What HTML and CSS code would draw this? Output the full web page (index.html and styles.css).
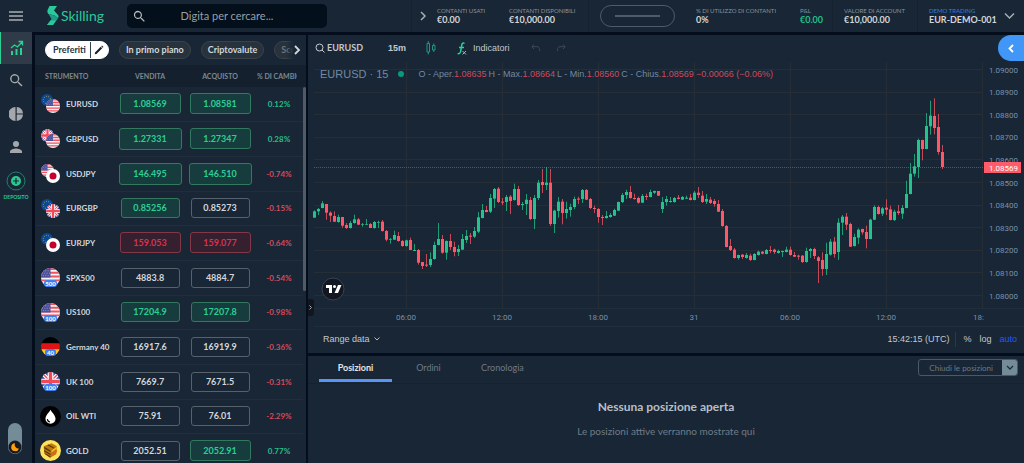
FILE: index.html
```html
<!DOCTYPE html>
<html lang="it">
<head>
<meta charset="utf-8">
<title>Skilling</title>
<meta name="viewport" content="width=device-width, initial-scale=1">
<link rel="stylesheet" href="styles.css">
</head>
<body>
<svg class="defs" aria-hidden="true">
  <defs>
    <clipPath id="round"><circle cx="10" cy="10" r="10"/></clipPath>
    <symbol id="us" viewBox="0 0 20 20"><g clip-path="url(#round)"><path fill="#f4f4f6" d="M0 0h20v20H0z"/><path stroke="#f0525f" stroke-width="2" d="M0 1h20M0 5h20M0 9h20M0 13h20M0 17h20"/><path fill="#4a4f9a" d="M0 0h10v10H0z"/><path stroke="#9ca0cf" stroke-width="1" stroke-dasharray="1 1.5" d="M2 3h8M1 5.500h9M2 8h8"/></g></symbol>
    <symbol id="eu" viewBox="0 0 20 20"><circle cx="10" cy="10" r="10" fill="#0b4a93"/><circle cx="10" cy="10" r="6" fill="none" stroke="#b9a84a" stroke-width="1.600" stroke-dasharray="1.500 2.200"/></symbol>
    <symbol id="gb" viewBox="0 0 20 20"><g clip-path="url(#round)"><path fill="#3b4a9c" d="M0 0h20v20H0z"/><path stroke="#fff" stroke-width="4" d="M0 0l20 20M20 0L0 20"/><path stroke="#e8505e" stroke-width="1.500" d="M0 0l20 20M20 0L0 20"/><path stroke="#fff" stroke-width="6" d="M10 0v20M0 10h20"/><path stroke="#f04a5a" stroke-width="3.500" d="M10 0v20M0 10h20"/></g></symbol>
    <symbol id="jp" viewBox="0 0 20 20"><circle cx="10" cy="10" r="10" fill="#fff"/><circle cx="10" cy="10" r="5" fill="#c4002f"/></symbol>
    <symbol id="de" viewBox="0 0 20 20"><g clip-path="url(#round)"><path d="M0 0h20v7H0z"/><path fill="#e01414" d="M0 6.500h20v7H0z"/><path fill="#ffc81e" d="M0 13h20v7H0z"/></g></symbol>
    <symbol id="oil" viewBox="0 0 20 20"><circle cx="10" cy="10" r="10"/><path fill="#fff" d="M10 3.500c1 2.200 4.800 5.400 4.800 8.600a4.800 4.800 0 0 1-9.600 0C5.200 8.900 9 5.700 10 3.500z"/><path stroke="#000" fill="none" d="M7 12.500a3 3 0 0 0 2.500 2.700"/></symbol>
    <symbol id="gold" viewBox="0 0 20 20"><circle cx="10" cy="10" r="10" fill="#ffe15c"/><path fill="#b97a10" d="M3.500 6L11 3l5 3-.5 7.500L9.500 17 4 13z"/><path fill="#5a3505" d="M4 6.500l6 3.500v1.500L4 8zM4 9.500l6 3.500v1.500L4 11zM5 12.500l5 3v1.500l-5-3.500zM8 4.200l6 3.300-1.200.7-6-3.300z"/><path fill="#e2611b" d="M11 13l5-4v2.500L11 16z"/><path fill="#f7bd2c" d="M11 10l5-3.500V8l-5 3.800z"/></symbol>
    <symbol id="lens" viewBox="0 0 24 24"><path fill="currentColor" d="M15.500 14h-.8l-.3-.3A6.500 6.500 0 1 0 13.700 14.400l.3.300v.8l5 5 1.500-1.500zm-6 0a4.500 4.500 0 1 1 0-9 4.500 4.500 0 0 1 0 9z"/></symbol>
  </defs>
</svg>

<div class="app">
  <header class="topbar">
    <button class="icon-btn menu" aria-label="Menu"><svg width="14" height="10" viewBox="0 0 14 10"><path stroke="#a9adb2" stroke-width="1.400" d="M0 1h14M0 5h14M0 9h14"/></svg></button>
    <a class="logo" href="#"><svg width="12" height="20" viewBox="0 0 12 20" aria-hidden="true"><path fill="#2ac99c" d="M2.500 0H10L7 4.500l4 4.500c.8 1 .8 2 0 3L7.500 9.500 1.500 8C.2 6.500 0 5 .8 3.500z"/><path fill="#1f9d86" d="M1.500 8l6 1.500L11 12c-.3 1.200-1 2-2 3l-3 4H0l4.500-6z"/><path fill="#2ac99c" d="M0 19l3.500-4.500H9L6 19z"/></svg><span>Skilling</span></a>
    <label class="search"><svg width="15" height="15" aria-hidden="true"><use href="#lens"/></svg><input type="text" placeholder="Digita per cercare..." aria-label="Cerca"></label>
    <div class="account">
      <button class="icon-btn expand" aria-label="Espandi"><svg width="8" height="10" viewBox="0 0 8 10"><path class="line" d="M2 1l4 4-4 4"/></svg></button>
      <div class="stat used"><span>CONTANTI USATI</span><b>€0.00</b></div>
      <div class="stat available"><span>CONTANTI DISPONIBILI</span><b>€10,000.00</b></div>
      <div class="gauge"><i></i></div>
      <div class="stat usage"><span>% DI UTILIZZO DI CONTANTI</span><b>0%</b></div>
      <div class="stat pl"><span>P&amp;L</span><b class="up">€0.00</b></div>
      <div class="stat value"><span>VALORE DI ACCOUNT</span><b>€10,000.00</b></div>
      <button class="stat demo"><span>DEMO TRADING</span><b>EUR-DEMO-001</b><svg width="11" height="8" viewBox="0 0 11 8" aria-hidden="true"><path class="line" d="M1 1.500l4.500 4.500L10 1.500"/></svg></button>
    </div>
  </header>

  <nav class="rail" aria-label="Principale">
    <a class="rail-item active" href="#" aria-label="Trading"><svg width="14" height="16" viewBox="0 0 14 16"><path fill="#2cd093" d="M1 11h2v4H1zM5.500 9h2v6h-2zM10 8h2v7h-2z"/><path fill="none" stroke="#2cd093" stroke-width="1.300" d="M1 8l3.500-3 3 2L12 2M8.500 1.500h4v4"/></svg></a>
    <a class="rail-item" href="#" aria-label="Cerca"><svg width="17" height="17"><use href="#lens"/></svg></a>
    <a class="rail-item" href="#" aria-label="Portafoglio"><svg width="14" height="14" viewBox="0 0 14 14"><path fill="#a4a8ad" d="M6.500 0v14A7 7 0 0 1 6.500 0zM7.700 0A7 7 0 0 1 14 6.400H7.700zM7.700 7.600H14A7 7 0 0 1 7.700 14z"/></svg></a>
    <a class="rail-item" href="#" aria-label="Profilo"><svg width="12" height="12" viewBox="0 0 12 12"><circle cx="6" cy="3" r="3" fill="#a4a8ad"/><path fill="#a4a8ad" d="M0 12v-1.500C0 8.500 4 7.500 6 7.500s6 1 6 3V12z"/></svg></a>
    <a class="rail-item deposit" href="#"><svg width="20" height="20" viewBox="0 0 20 20"><circle cx="10" cy="10" r="9" fill="none" stroke="#1f8169"/><circle cx="10" cy="10" r="5" fill="#2cc991"/><path stroke="#182635" stroke-width="1.200" d="M10 7v6M7 10h6"/></svg><span>DEPOSITO</span></a>
    <button class="theme" aria-label="Tema scuro"><svg width="14" height="14" viewBox="0 0 14 14"><circle cx="7" cy="7" r="6.500" fill="#151a20"/><path fill="#ff9d14" d="M7 3.200a4 4 0 1 0 4 5.300A3.800 3.800 0 0 1 7 3.200z"/></svg></button>
  </nav>

  <section class="watchlist">
    <div class="chips">
      <div class="chip selected"><button>Preferiti</button><button class="edit" aria-label="Modifica"><svg width="10" height="10" viewBox="0 0 10 10"><path fill="#17222e" d="M1 7.500L6.700 1.800l1.500 1.500L2.500 9 .8 9.200zM7.200 1.300l.8-.8 1.500 1.500-.8.800z"/></svg></button></div>
      <button class="chip">In primo piano</button>
      <button class="chip">Criptovalute</button>
      <button class="chip faded">Scorte</button>
      <button class="next" aria-label="Avanti"><svg width="8" height="10" viewBox="0 0 8 10"><path fill="none" stroke="#d5d8db" stroke-width="1.800" d="M2 1l4 4-4 4"/></svg></button>
    </div>
    <div class="quotes-wrap">
    <table class="quotes">
      <colgroup><col class="w-flag"><col class="w-sym"><col class="w-price"><col class="w-price"><col></colgroup>
      <thead><tr><th class="c-name" colspan="2">STRUMENTO</th><th>VENDITA</th><th>ACQUISTO</th><th><span class="clip">% DI CAMBIO</span></th></tr></thead>
      <tbody>
        <tr><td class="c-flag"><svg class="flag" viewBox="0 0 19 19"><use href="#eu" width="12" height="12"/><use href="#us" x="5" y="5" width="14" height="14"/></svg></td><td class="c-sym">EURUSD</td><td><button class="price rise mid">1.08569</button></td><td><button class="price rise mid">1.08581</button></td><td class="up">0.12%</td></tr>
        <tr><td class="c-flag"><svg class="flag" viewBox="0 0 19 19"><use href="#gb" width="13" height="13"/><use href="#us" x="5" y="5" width="14" height="14"/></svg></td><td class="c-sym">GBPUSD</td><td><button class="price rise big">1.27331</button></td><td><button class="price rise mid">1.27347</button></td><td class="up">0.28%</td></tr>
        <tr><td class="c-flag"><svg class="flag" viewBox="0 0 19 19"><use href="#us" width="13" height="13"/><use href="#jp" x="5" y="5" width="14" height="14"/></svg></td><td class="c-sym">USDJPY</td><td><button class="price rise big">146.495</button></td><td><button class="price rise big">146.510</button></td><td class="down">-0.74%</td></tr>
        <tr><td class="c-flag"><svg class="flag" viewBox="0 0 19 19"><use href="#eu" width="12" height="12"/><use href="#gb" x="5" y="5" width="14" height="14"/></svg></td><td class="c-sym">EURGBP</td><td><button class="price rise">0.85256</button></td><td><button class="price">0.85273</button></td><td class="down">-0.15%</td></tr>
        <tr><td class="c-flag"><svg class="flag" viewBox="0 0 19 19"><use href="#eu" width="12" height="12"/><use href="#jp" x="5" y="5" width="14" height="14"/></svg></td><td class="c-sym">EURJPY</td><td><button class="price fall mid">159.053</button></td><td><button class="price fall mid">159.077</button></td><td class="down">-0.64%</td></tr>
        <tr><td class="c-flag"><svg class="flag" viewBox="0 0 19 19"><use href="#us" width="19" height="19"/><rect class="tag" x="3" y="12" width="13" height="7" rx="3"/><text x="9.500" y="17.500">500</text></svg></td><td class="c-sym">SPX500</td><td><button class="price">4883.8</button></td><td><button class="price">4884.7</button></td><td class="down">-0.54%</td></tr>
        <tr><td class="c-flag"><svg class="flag" viewBox="0 0 19 19"><use href="#us" width="19" height="19"/><rect class="tag" x="3" y="12" width="13" height="7" rx="3"/><text x="9.500" y="17.500">100</text></svg></td><td class="c-sym">US100</td><td><button class="price rise">17204.9</button></td><td><button class="price rise">17207.8</button></td><td class="down">-0.98%</td></tr>
        <tr><td class="c-flag"><svg class="flag" viewBox="0 0 19 19"><use href="#de" width="19" height="19"/><rect class="tag" x="4" y="12" width="11" height="7" rx="3"/><text x="9.500" y="17.500">40</text></svg></td><td class="c-sym">Germany 40</td><td><button class="price">16917.6</button></td><td><button class="price">16919.9</button></td><td class="down">-0.36%</td></tr>
        <tr><td class="c-flag"><svg class="flag" viewBox="0 0 19 19"><use href="#gb" width="19" height="19"/><rect class="tag" x="3" y="12" width="13" height="7" rx="3"/><text x="9.500" y="17.500">100</text></svg></td><td class="c-sym">UK 100</td><td><button class="price">7669.7</button></td><td><button class="price">7671.5</button></td><td class="down">-0.31%</td></tr>
        <tr><td class="c-flag"><svg class="flag full" viewBox="0 0 20 20"><use href="#oil" width="20" height="20"/></svg></td><td class="c-sym">OIL WTI</td><td><button class="price">75.91</button></td><td><button class="price">76.01</button></td><td class="down">-2.29%</td></tr>
        <tr><td class="c-flag"><svg class="flag full" viewBox="0 0 20 20"><use href="#gold" width="20" height="20"/></svg></td><td class="c-sym">GOLD</td><td><button class="price">2052.51</button></td><td><button class="price rise mid">2052.91</button></td><td class="up">0.77%</td></tr>
      </tbody>
    </table>
    <div class="scrollbar"></div>
    </div>
  </section>

  <section class="chart">
    <div class="chart-tools">
      <button class="symbol"><svg width="10" height="10" viewBox="0 0 10 10" aria-hidden="true"><circle cx="4.500" cy="4.500" r="3.500" fill="none" stroke="#c8ccd2"/><path stroke="#c8ccd2" d="M7 7l2.500 2.500"/></svg>EURUSD</button>
      <button class="period">15m</button>
      <button class="candle-type" aria-label="Candele"><svg width="10" height="14" viewBox="0 0 10 14"><g fill="none" stroke="#1f9a7c"><path d="M1 2.500h2.500v8.500H1zM2.250 0v2.500M2.250 11v2.500"/><path d="M6.500 4.500H9V9H6.500zM7.750 2.500v2M7.750 9v2"/></g></svg></button>
      <button class="indicators"><svg width="10" height="13" viewBox="0 0 10 13" aria-hidden="true"><path fill="none" stroke="#2bd0a0" stroke-width="1.500" d="M7.500 1.500C6 .5 5 1.200 4.800 3L3.600 9.500C3.300 11.500 2 12 .6 11.400M2 5.500h5"/><path stroke="#9fb3bd" d="M5.500 9l3.500 3.500M9 9l-3.500 3.500"/></svg>Indicatori</button>
      <button class="undo" aria-label="Annulla"><svg width="9" height="8" viewBox="0 0 9 8"><path class="dim" d="M3 .5L.8 2.700 3 5M1 2.700h5c1.500 0 2.500 1 2.500 3V7"/></svg></button>
      <button class="redo" aria-label="Ripeti"><svg width="9" height="8" viewBox="0 0 9 8"><path class="dim" d="M6 .5l2.200 2.200L6 5M8 2.700H3C1.500 2.700.5 3.700.5 5.700V7"/></svg></button>
    </div>
    <div class="plot">
      <svg id="plot" viewBox="308 62 716 266" preserveAspectRatio="xMaxYMin meet" role="img" aria-label="Grafico EURUSD 15 minuti"></svg>
      <div class="legend">
        <span class="title">EURUSD · 15</span><i class="live"></i>
        <span>O - Aper.<b>1.08635</b></span><span>H - Max.<b>1.08664</b></span><span>L - Min.<b>1.08560</b></span><span>C - Chius.<b>1.08569</b></span><span><b>−0.00066 (−0.06%)</b></span>
      </div>
      <a class="tv" href="#" aria-label="TradingView"><svg width="24" height="24" viewBox="0 0 24 24"><circle cx="12" cy="12" r="11" fill="#131722" stroke="#3b4250"/><path fill="#fff" d="M5 8h6v8H8v-5H5zM17 8h3.500l-3.500 8h-3.500z"/><circle cx="13.500" cy="9.500" r="1.500" fill="#fff"/></svg></a>
      <button class="drawer" aria-label="Strumenti"><svg width="3" height="5" viewBox="0 0 3 5"><path fill="none" stroke="#a3a6ac" d="M.5.5l2 2-2 2"/></svg></button>
    </div>
    <div class="chart-foot">
      <button class="range">Range data <svg width="6" height="4" viewBox="0 0 6 4" aria-hidden="true"><path fill="none" stroke="#b4bac2" d="M.5.5L3 3 5.500.5"/></svg></button>
      <span class="clock">15:42:15 (UTC)</span>
      <button class="percent">%</button><button>log</button><button class="auto">auto</button>
    </div>
    <button class="side-open" aria-label="Apri pannello"><svg width="6" height="9" viewBox="0 0 6 9"><path fill="none" stroke="#fff" stroke-width="1.800" d="M5 1L1.500 4.500 5 8"/></svg></button>
  </section>

  <section class="positions">
    <div class="tabs">
      <button class="tab current">Posizioni</button><button class="tab">Ordini</button><button class="tab">Cronologia</button>
      <div class="close-all"><button>Chiudi le posizioni</button><button class="caret" aria-label="Altre opzioni"><svg width="8" height="6" viewBox="0 0 8 6"><path fill="none" stroke="#1d2d3b" stroke-width="1.300" d="M1 1l3 3 3-3"/></svg></button></div>
    </div>
    <div class="empty"><h2>Nessuna posizione aperta</h2><p>Le posizioni attive verranno mostrate qui</p></div>
  </section>
</div>
<script src="chart.js"></script>
</body>
</html>
```
FILE: styles.css
```css
* { box-sizing: border-box; }
html, body { height: 100%; }
body { margin: 0; background: #030d1c; color: #d3d7db; font-family: Lato, sans-serif; font-size: 9px; line-height: 12px; overflow: hidden; }
button { margin: 0; padding: 0; border: 0; background: none; color: inherit; font: inherit; cursor: pointer; }
a { color: inherit; text-decoration: none; }
svg { display: block; flex: none; }
.defs { position: absolute; width: 0; height: 0; }
.line { fill: none; stroke: #a9adb2; stroke-width: 1.5; }
.dim { fill: none; stroke: #3d4957; }
.up { color: #26bf89; }
.down { color: #d64a5c; }

.app { display: grid; grid-template: 32px minmax(0, 1fr) 107px / 32px 271px minmax(0, 1fr); gap: 3px; height: 100vh; }
.app > * { background: #182635; }

.topbar { grid-column: 1 / -1; display: flex; align-items: center; }
.icon-btn { display: flex; align-items: center; justify-content: center; }
.menu { width: 32px; height: 32px; }
.logo { display: flex; align-items: center; gap: 2px; width: 80px; margin-left: 15px; color: #2ac99c; font-size: 14px; line-height: 20px; }
.search { display: flex; align-items: center; width: 200px; height: 24px; padding: 0 5px; border-radius: 5px; background: #030f1b; color: #b8bcc0; }
.search input { flex: 1; min-width: 0; padding: 0 15px 0 0; border: 0; outline: 0; background: none; color: #c0c4c8; font: 11px/16px Lato, sans-serif; text-align: center; }
.search input::placeholder { color: #9a9fa4; opacity: 1; }
.account { display: flex; align-items: center; height: 32px; margin-left: auto; }
.account > * { flex: none; }
.expand { width: 26px; height: 32px; padding-right: 4px; border-left: 1px solid #14212e; }
.stat { display: flex; flex-direction: column; justify-content: center; height: 32px; text-align: left; white-space: nowrap; }
.stat span { color: #8a939c; font-size: 6px; line-height: 8px; }
.stat b { font-size: 9px; line-height: 10px; }
.used { width: 72px; }
.available, .pl, .value { border-right: 1px solid #14212e; }
.available { width: 80px; }
.gauge { display: flex; align-items: center; width: 75px; height: 22px; margin: 0 21px 0 11px; padding: 0 14px; border: 1px solid #4f5b66; border-radius: 11px; }
.gauge i { flex: 1; height: 2px; background: #4f5b66; }
.usage { width: 104px; }
.pl { width: 33px; }
.value { width: 85px; padding-left: 11px; }
.demo { display: grid; grid-template-columns: 75px 11px; align-content: center; justify-content: start; width: 106px; padding-left: 11px; }
.demo span { color: #2f7fe0; }
.demo b { grid-row: 2; }
.demo svg { grid-column: 2; grid-row: 1 / 3; align-self: center; }

.rail { grid-row: 2 / 4; display: flex; flex-direction: column; margin-top: -3px; color: #a4a8ad; }
.rail-item { display: flex; flex-direction: column; align-items: center; justify-content: center; height: 33px; }
.active { height: 32px; border-left: 1px solid #2cd093; background: #2f3b49; }
.deposit { height: 46px; gap: 2px; color: #2cc991; font-size: 5px; line-height: 8px; font-weight: bold; }
.theme { display: flex; align-items: flex-end; width: 14px; height: 31px; margin: auto 0 9px 8px; border-radius: 7px; background: #748b98; }

.watchlist { grid-row: 2 / 4; display: flex; flex-direction: column; overflow: hidden; }
.chips { display: flex; align-items: center; gap: 10px; height: 30px; padding-left: 10px; flex: none; overflow: hidden; position: relative; }
.chip { flex: none; height: 18px; padding: 0 6px; border: 1px solid #3a434c; border-radius: 9px; background: #27323c; font-weight: bold; line-height: 14px; }
.selected { display: flex; align-items: center; width: 64px; padding: 0; border-color: #fff; background: #fff; color: #243342; }
.selected button { flex: 1; height: 16px; padding-left: 3px; }
.selected .edit { display: flex; align-items: center; flex: 0 0 18px; border-left: 1px solid #33404d; }
.faded { color: #6c757e; }
.next { position: absolute; right: 0; top: 0; display: flex; align-items: center; width: 20px; height: 30px; padding-left: 7px; background: linear-gradient(90deg, rgba(24, 38, 53, 0), #182635 8px); }

.quotes-wrap { position: relative; flex: 1; min-height: 0; overflow: hidden; background: linear-gradient(#14202d 22px, transparent 22px); }
.quotes { width: 268px; border-collapse: collapse; table-layout: fixed; font-weight: bold; font-size: 8px; }
.w-flag { width: 31px; }
.w-sym { width: 49px; }
.w-price { width: 70px; }
.quotes th { height: 22px; padding: 0; color: #7f8890; font-size: 7px; text-align: center; white-space: nowrap; }
.quotes .c-name { padding-left: 10px; text-align: left; }
.clip { display: block; width: 40px; margin-left: 2px; overflow: hidden; text-align: left; }
.quotes td { height: 35px; padding: 0; border-bottom: 1px solid #202d3a; text-align: center; vertical-align: middle; }
.quotes tr:nth-child(3n + 1) td { height: 34px; }
.quotes .c-flag { padding-left: 5px; }
.quotes .c-sym { text-align: left; white-space: nowrap; }
.flag { width: 19px; height: 19px; margin: 0 1px; }
.flag.full { width: 21px; height: 21px; margin: 0; }
.flag text { fill: #fff; font-size: 6px; text-anchor: middle; }
.tag { fill: #3f80f0; }
.price { width: 59px; height: 20px; border: 1px solid #56616c; border-radius: 3px; font-size: 9px; line-height: 12px; }
.mid { width: 61px; height: 21px; }
.big { width: 63px; height: 22px; }
.rise { border-color: #33795f; background: #163c3d; color: #2bcf96; }
.fall { border-color: #823846; background: #35202f; color: #d53454; }
.scrollbar { position: absolute; right: 0; top: 22px; width: 3px; height: 204px; border-radius: 2px; background: #505b65; }

.chart { position: relative; display: flex; flex-direction: column; min-width: 0; margin-left: -1px; font-family: "Liberation Sans", sans-serif; }
.chart-tools { display: flex; align-items: center; height: 26px; padding: 0 7px; flex: none; color: #c3c8ce; }
.chart-tools button { display: flex; align-items: center; }
.symbol { gap: 2px; width: 73px; font: bold 9px/12px Lato, sans-serif; }
.period { width: 38px; font-weight: bold; }
.candle-type { width: 31px; }
.indicators { gap: 6px; width: 74px; }
.undo { width: 26px; }
.plot { position: relative; flex: 1; min-height: 0; overflow: hidden; }
.plot > svg { width: 100%; height: 100%; font: 8px Roboto, sans-serif; }
.legend { position: absolute; left: 12px; top: 5px; display: flex; align-items: center; gap: 2px; height: 16px; color: #7389a3; white-space: nowrap; }
.legend .title { font-size: 11px; }
.live { width: 6px; height: 6px; margin: 0 12px 0 8px; border-radius: 3px; background: #089981; }
.legend b { color: #cf4a5c; font-weight: normal; }
.tv { position: absolute; left: 13px; bottom: 26px; }
.drawer { position: absolute; left: 0; bottom: 11px; display: flex; align-items: center; width: 6px; height: 17px; padding-left: 1px; border-radius: 0 3px 3px 0; background: #11151f; }
.chart-foot { display: flex; align-items: center; height: 26px; padding: 0 7px 2px 15px; flex: none; color: #c3c8ce; }
.chart-foot button { flex: none; }
.range { display: flex; align-items: center; gap: 4px; }
.clock { margin-left: auto; padding-right: 6px; border-right: 1px solid #2b3846; line-height: 15px; }
.chart-foot .percent { margin: 0 8px 0 7px; }
.chart-foot .auto { margin-left: 8px; color: #2a56f5; }
.side-open { position: absolute; right: 0; top: 0; display: flex; align-items: center; width: 26px; height: 26px; padding-left: 10px; border-radius: 13px 0 0 13px; background: #4197f7; }

.positions { margin-left: -1px; min-width: 0; }
.tabs { display: flex; height: 28px; padding: 0 6px 0 11px; border-bottom: 1px solid #152330; }
.tab { height: 26px; min-width: 73px; padding: 0 16px; border-bottom: 3px solid transparent; color: #6f7a85; }
.current { border-color: #5a94f5; color: #e4e7ea; font-weight: bold; }
.close-all { display: flex; height: 17px; margin: 3px 0 0 auto; border: 1px solid #4a5965; border-radius: 3px; overflow: hidden; color: #6d7a86; font-size: 8px; }
.close-all button { padding: 0 9px 0 10px; }
.close-all .caret { display: flex; align-items: center; justify-content: center; width: 15px; padding: 0; background: #748b98; }
.empty { padding-top: 15px; text-align: center; }
.empty h2 { margin: 0; color: #b9bfc6; font-size: 12px; line-height: 16px; }
.empty p { margin: 9px 0 0; color: #6f7c89; font-size: 10px; line-height: 14px; }

.grid { stroke: #262d34; }
.edge { stroke: #202d3a; }
.axis { fill: #7b90aa; }
.axis-mid { fill: #7b90aa; text-anchor: middle; }
.last-line { stroke: #8a3f4e; stroke-dasharray: 1 1; }
.last-box { fill: #ff5b69; }
.last-text { fill: #fff; }
.bar-up { fill: #22c38c; stroke: #22c38c; }
.bar-down { fill: #ff5765; stroke: #ff5765; }
.wick { stroke-width: 1; opacity: .75; }
.body { stroke: none; }
```
FILE: chart.js
```js
// Each bar: wick top, body top, body bottom, wick bottom, direction.
// Values are thirds of a pixel, measured down from each run's own origin.
const runs = [
  [540, "94,97,116,116,u 87,90,97,108,u 66,73,87,88,u 75,75,101,122,d 97,101,110,129,d 97,111,128,129,d 107,114,129,131,u 114,114,140,146,d 132,138,147,150,d 126,132,147,149,u 107,121,132,134,u 117,121,137,138,d 132,135,137,143,u 120,135,137,138,u 132,135,147,147,d 126,129,147,149,u 125,129,131,147,u 123,128,156,158,d 153,156,182,187,d 177,181,183,194,u 155,168,182,183,u 159,171,186,188,d 183,186,201,203,d 182,184,201,203,u 176,183,213,213,d 195,213,216,216,u 210,213,251,257,d 249,249,261,270,d 225,257,260,264,d 220,240,258,264,u 188,198,240,242,u 132,180,198,199,u 168,180,221,224,d 184,186,221,242,u 165,186,204,213,d 188,204,219,232,d 198,210,219,231,u 165,180,212,213,u 153,171,183,192,u 162,170,173,195,d 144,156,173,177,u 99,115,158,162,u"],
  [450, "165,183,207,208,u 171,183,189,190,d 135,147,188,192,u 117,120,149,177,u 114,119,159,162,d 147,158,161,168,d 138,144,159,186,u 138,143,156,195,d 104,120,153,155,u 111,120,168,171,d 159,165,168,183,u 135,152,165,198,u 144,153,210,213,d 138,147,210,240,u 93,101,147,153,u 60,99,108,132,d 54,101,108,123,u 60,101,225,231,d 182,185,225,252,u 144,158,186,206,u 150,158,192,226,d 158,180,192,209,u 164,174,183,203,u 143,150,174,181,u 143,149,152,165,d 120,123,150,162,u 120,123,152,153,d 147,150,177,180,d 170,177,180,192,d 177,180,204,221,d 198,204,207,228,d 186,201,207,209,u 192,198,204,206,u 179,183,200,201,u 158,159,185,186,u 132,138,159,162,u 122,129,138,150,u 111,129,147,149,d 134,147,150,152,d 143,147,161,164,d 135,141,161,162,u 134,141,144,153,d 122,129,144,145,u 125,126,131,135,u 126,126,140,141,d"],
  [480, "114,129,150,162,u 111,120,129,140,u 114,126,129,131,u 114,117,129,131,u 108,116,120,121,d 111,114,122,123,u 110,116,119,120,u 105,116,123,124,d 96,101,123,124,u 84,101,108,117,d 96,110,129,132,d 105,120,128,135,u 114,122,132,135,d 120,126,135,143,d 123,135,158,159,d 150,156,201,203,d 198,201,264,265,d 240,261,273,276,d 267,272,297,299,d 287,288,297,302,u 285,287,294,300,d 282,288,297,299,u 284,290,303,306,d 282,285,303,304,u 275,278,288,290,u 276,278,284,286,d 270,273,285,286,u 261,273,276,282,d 269,272,279,285,d 272,276,282,284,u 275,276,279,294,u 263,272,279,280,u 263,272,288,290,d 279,288,293,294,d 287,290,293,302,d 288,290,309,312,d 266,276,309,311,u 267,270,276,297,u 266,270,291,300,d"],
  [240, "531,535,546,612,d 520,543,570,590,d 491,525,570,588,u 480,488,527,530,u 474,488,525,536,d 418,431,519,543,u 408,413,431,468,u 402,413,437,453,d 431,435,503,504,d 464,474,501,503,u 448,452,476,495,u 449,450,460,467,d 440,459,480,508,d 419,422,480,481,u 379,384,422,423,u 380,384,405,407,d 384,388,404,411,u 361,386,392,408,d 380,391,423,424,d 392,398,423,426,u 378,397,402,408,d 378,387,404,420,u 305,345,387,388,u 252,284,345,346,u 225,262,284,293,u 179,183,264,297,u 182,183,210,244,d 102,141,210,211,u 65,110,142,167,u 58,111,147,166,d 105,144,219,227,d 198,219,264,270,d"]
];

const line = (cls, x1, y1, x2, y2) => `<line class="${cls}" x1="${x1}" y1="${y1}" x2="${x2}" y2="${y2}"/>`;
const label = (cls, x, y, text) => `<text class="${cls}" x="${x}" y="${y}">${text}</text>`;
let out = "";

for (let i = 0; i <= 10; i++) {
  const y = 70.5 + i * 22.6;
  out += line("grid", 314, Math.floor(y) + 0.5, 983, Math.floor(y) + 0.5);
  out += label("axis", 989, y + 3, (1.09 - i * 0.001).toFixed(5));
}
["06:00", "12:00", "18:00", "31", "06:00", "12:00", "18:"].forEach((text, i) => {
  const x = 406.5 + i * 96;
  out += line("grid", x, 63, x, 309);
  out += label("axis-mid", i === 6 ? x - 4 : x - 0.5, 321, text);
});
out += line("edge", 314, 309.5, 1024, 309.5) + line("edge", 314, 327.5, 1024, 327.5);
out += line("last-line", 314, 168.5, 984, 168.5);

let n = 0;
for (const [top, bars] of runs) {
  for (const bar of bars.split(" ")) {
    const [high, open, close, low, dir] = bar.split(",");
    const y = v => (top + Number(v)) / 3;
    const x = 314.5 + n * 4;
    const cls = dir === "u" ? "bar-up" : "bar-down";
    out += line(cls + " wick", x, y(high), x, y(low));
    out += `<rect class="${cls} body" x="${x - 1.5}" y="${y(open)}" width="3" height="${y(close) - y(open)}"/>`;
    n++;
  }
}
out += '<rect class="last-box" x="984" y="163" width="37" height="11"/>' + label("last-text", 989, 171.500, "1.08569");
document.getElementById("plot").innerHTML = out;
```
